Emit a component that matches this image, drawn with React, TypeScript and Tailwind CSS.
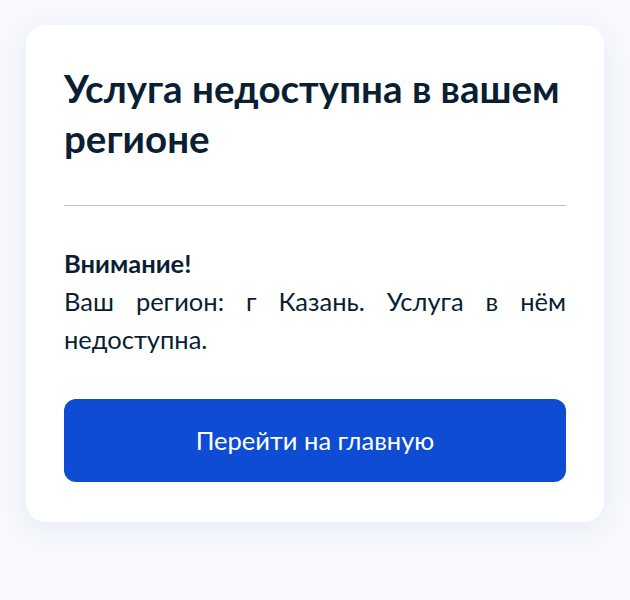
import React from 'react';

const App: React.FC = () => {
  return (
    <div className="min-h-[600px] w-full bg-[#f7f9fd] px-[26px] pt-[25px] font-['Lato','Liberation_Sans',sans-serif] text-[#0b1f33]">
      <div className="rounded-[20px] bg-white px-[38px] pt-[38px] pb-[40px] shadow-[0_6px_28px_rgba(30,60,140,0.08)]">
        <h1 className="text-[38.5px] font-bold leading-[50px]">
          Услуга недоступна в вашем регионе
        </h1>

        <div className="mt-[42px] h-px bg-[#b3c4d6]" />

        <div className="mt-[38px] text-[25.5px] leading-[38px]">
          <p className="font-bold">Внимание!</p>
          <p className="text-justify">Ваш регион: г Казань. Услуга в нём недоступна.</p>
        </div>

        <button className="mt-[41px] flex h-[83px] w-full items-center justify-center rounded-[12px] bg-[#0d4cd3] text-[25.5px] text-white">
          Перейти на главную
        </button>
      </div>
    </div>
  );
};

export default App;
